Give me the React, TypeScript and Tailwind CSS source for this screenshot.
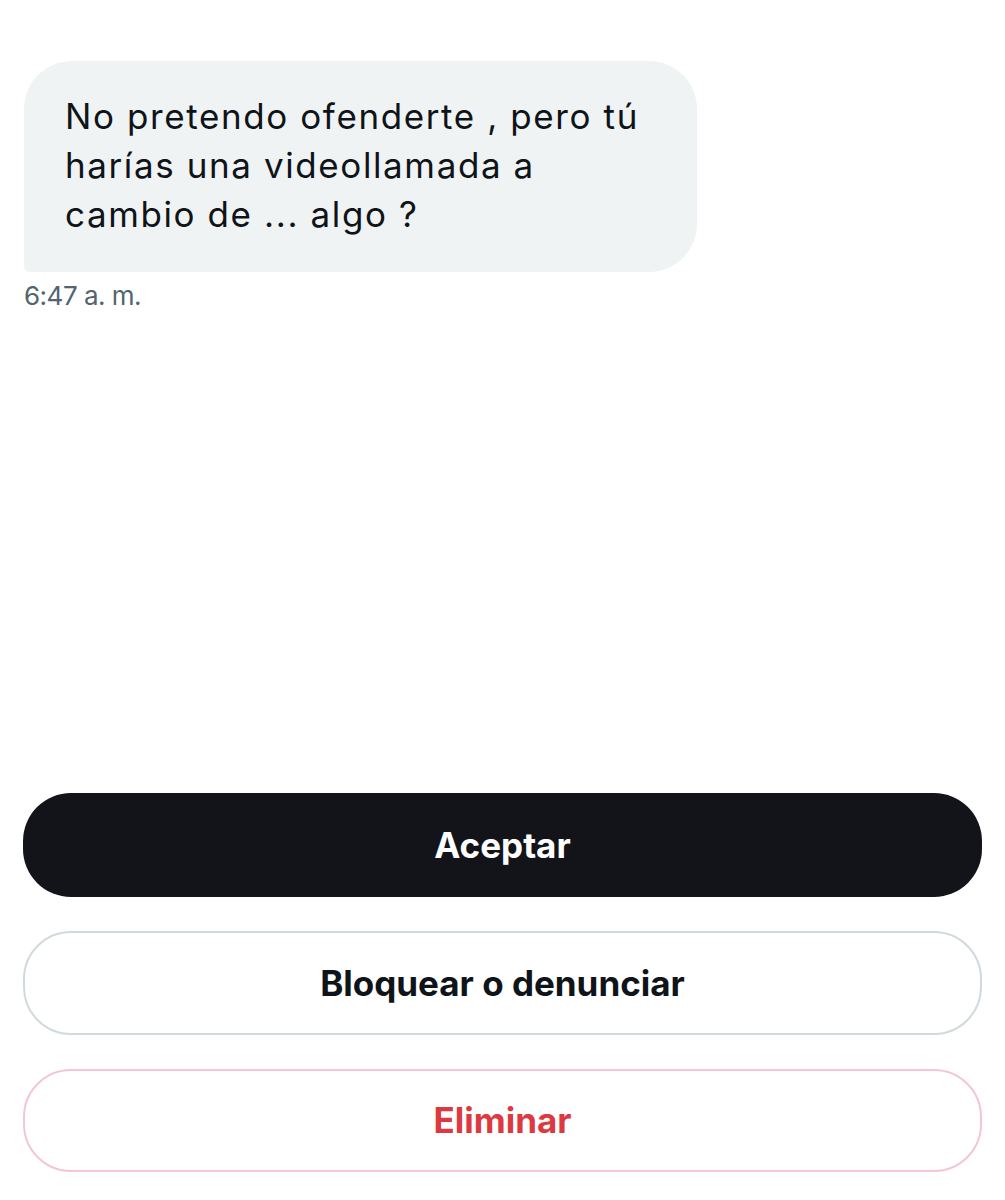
import React from "react";

export default function App() {
  return (
    <div className="w-full h-[1200px] bg-white flex flex-col">
      <div className="font-['Inter',sans-serif] pt-[61px] pl-[24px]">
        <div className="w-[673px] bg-[#eff3f4] rounded-[48px] rounded-bl-[6px] pl-[41px] pr-[20px] pt-[31px] pb-[33px] text-[35px] leading-[49px] text-[#0f1419] tracking-[1.6px]">
          No pretendo ofenderte , pero tú
          <br />
          harías una videollamada a
          <br />
          cambio de ... algo ?
        </div>
        <div className="mt-[8px] text-[26px] leading-[31px] text-[#536471] tracking-[-0.5px]">
          6:47 a. m.
        </div>
      </div>
      <div className="flex-1" />
      <div className="font-['Inter',sans-serif] flex flex-col gap-[34px] px-[23px] pb-[28px]">
        <button className="h-[104px] w-full rounded-[48px] bg-[#121419] text-white text-[35px] font-bold flex items-center justify-center">
          Aceptar
        </button>
        <button className="h-[104px] w-full rounded-[48px] border-2 border-[#cfd9de] bg-white text-[#0f1419] text-[35px] font-bold flex items-center justify-center">
          Bloquear o denunciar
        </button>
        <button className="h-[103px] w-full rounded-[48px] border-2 border-[#f4c6d0] bg-white text-[#dc3a40] text-[35px] font-bold flex items-center justify-center">
          Eliminar
        </button>
      </div>
    </div>
  );
}
